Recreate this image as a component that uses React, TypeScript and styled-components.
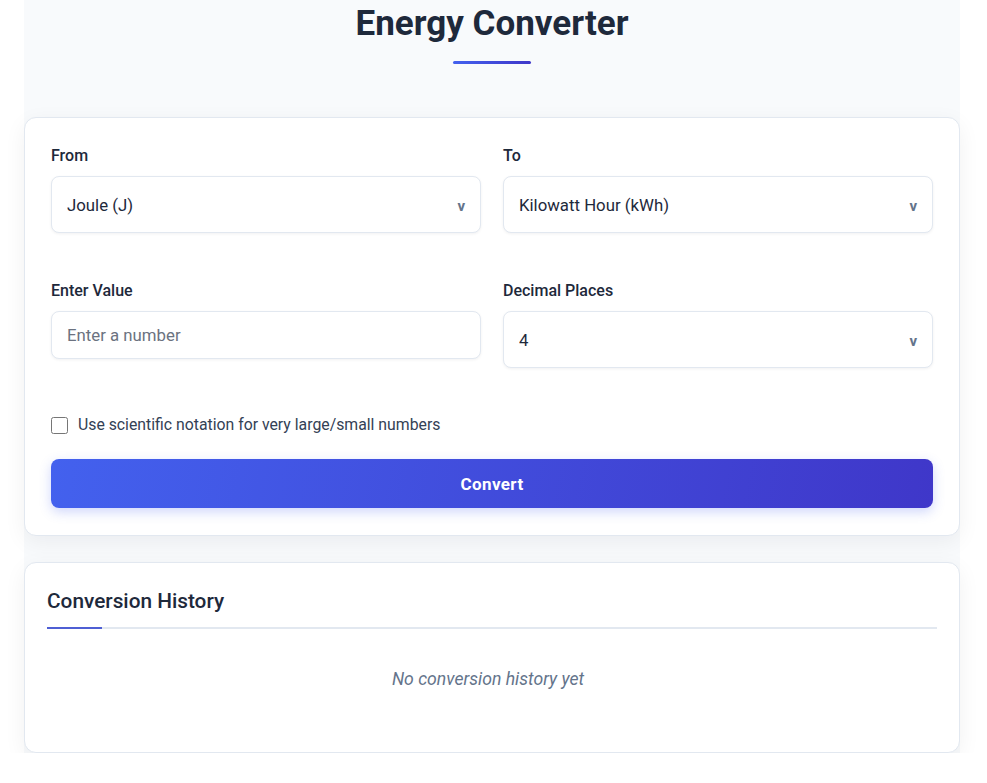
import React from "react";
import styled, { createGlobalStyle } from "styled-components";

const Global = createGlobalStyle`
  html, body { margin: 0; padding: 0; background: #ffffff; }
  body { font-family: Roboto, "Liberation Sans", Arial, sans-serif; color: #1e293b; }
  * { box-sizing: border-box; }
`;

const Page = styled.div`
  width: 936px;
  margin: 0 0 0 24px;
  background: #f8fafc;
  padding: 3px 0 0;
`;

const Header = styled.header`
  display: flex;
  flex-direction: column;
  align-items: center;
  margin-bottom: 53px;
`;

const Title = styled.h1`
  margin: 0;
  font-size: 35px;
  line-height: 42px;
  font-weight: 700;
  color: #1e293b;
`;

const Accent = styled.div`
  width: 78px;
  height: 3px;
  margin-top: 16px;
  border-radius: 2px;
  background: linear-gradient(90deg, #4361ee, #3f37c9);
`;

const Card = styled.section<{ $pad: string }>`
  background: #ffffff;
  border: 1px solid #e2e8f0;
  border-radius: 12px;
  box-shadow: 0 6px 22px rgba(15, 23, 42, 0.06);
  padding: ${(p) => p.$pad};
  display: flex;
  flex-direction: column;
`;

const Grid = styled.div`
  display: grid;
  grid-template-columns: 1fr 1fr;
  column-gap: 22px;
  row-gap: 46px;
  align-items: start;
`;

const Field = styled.div`
  display: flex;
  flex-direction: column;
`;

const Label = styled.label`
  font-size: 16px;
  line-height: 24px;
  font-weight: 500;
  color: #1e293b;
  margin-bottom: 8px;
`;

const SelectWrap = styled.div`
  position: relative;
`;

const Select = styled.select`
  appearance: none;
  -webkit-appearance: none;
  width: 100%;
  height: 57px;
  padding: 0 40px 0 15px;
  font-family: Roboto, "Liberation Sans", Arial, sans-serif;
  font-size: 16.8px;
  color: #1e293b;
  background: #ffffff;
  border: 1px solid #e2e8f0;
  border-radius: 8px;
  box-shadow: 0 1px 3px rgba(15, 23, 42, 0.06);
  outline: none;
`;

const Caret = styled.span`
  position: absolute;
  right: 16px;
  top: 50%;
  transform: translateY(-38%);
  font-size: 15px;
  font-weight: 700;
  color: #64748b;
  pointer-events: none;
  line-height: 1;
`;

const Input = styled.input`
  width: 100%;
  height: 48px;
  padding: 0 15px;
  font-family: Roboto, "Liberation Sans", Arial, sans-serif;
  font-size: 16.8px;
  color: #1e293b;
  background: #ffffff;
  border: 1px solid #e2e8f0;
  border-radius: 8px;
  box-shadow: 0 1px 3px rgba(15, 23, 42, 0.06);
  outline: none;
  &::placeholder { color: #6b7280; }
`;

const CheckRow = styled.label`
  display: flex;
  align-items: center;
  gap: 10px;
  margin-top: 45px;
  font-size: 15.8px;
  line-height: 24px;
  color: #334155;
`;

const Check = styled.input`
  width: 17px;
  height: 17px;
  margin: 0;
`;

const Button = styled.button`
  margin-top: 22px;
  height: 49px;
  border: none;
  border-radius: 8px;
  background: linear-gradient(100deg, #4361ee 0%, #3f37c9 100%);
  color: #ffffff;
  font-family: Roboto, "Liberation Sans", Arial, sans-serif;
  font-size: 17px;
  font-weight: 700;
  letter-spacing: 0.4px;
  box-shadow: 0 4px 12px rgba(67, 97, 238, 0.25);
  cursor: pointer;
`;

const Gap = styled.div`
  height: 26px;
`;

const HistoryHead = styled.div`
  position: relative;
  padding-bottom: 12px;
  border-bottom: 2px solid #e2e8f0;
  &::after {
    content: "";
    position: absolute;
    left: 0;
    bottom: -2px;
    width: 55px;
    height: 2px;
    background: #4f5fd4;
  }
`;

const HistoryTitle = styled.h2`
  margin: 0;
  font-size: 20.8px;
  line-height: 28px;
  font-weight: 500;
  color: #1e293b;
`;

const Empty = styled.p`
  margin: 0;
  padding: 38px 8px 37px 0;
  text-align: center;
  font-size: 17.6px;
  line-height: 24px;
  font-style: italic;
  color: #64748b;
`;

function SelectField({ label, value, options }: { label: string; value: string; options: string[] }) {
  return (
    <Field>
      <Label>{label}</Label>
      <SelectWrap>
        <Select defaultValue={value}>
          {options.map((o) => (
            <option key={o} value={o}>
              {o}
            </option>
          ))}
        </Select>
        <Caret>v</Caret>
      </SelectWrap>
    </Field>
  );
}

const units = [
  "Joule (J)",
  "Kilojoule (kJ)",
  "Calorie (cal)",
  "Kilocalorie (kcal)",
  "Watt Hour (Wh)",
  "Kilowatt Hour (kWh)",
  "Electronvolt (eV)",
  "British Thermal Unit (BTU)",
];

export default function App() {
  return (
    <>
      <Global />
      <Page>
        <Header>
          <Title>Energy Converter</Title>
          <Accent />
        </Header>
        <Card $pad="26px 26px 27px">
          <Grid>
            <SelectField label="From" value="Joule (J)" options={units} />
            <SelectField label="To" value="Kilowatt Hour (kWh)" options={units} />
            <Field>
              <Label>Enter Value</Label>
              <Input type="number" placeholder="Enter a number" />
            </Field>
            <SelectField
              label="Decimal Places"
              value="4"
              options={["0", "1", "2", "3", "4", "5", "6", "8", "10"]}
            />
          </Grid>
          <CheckRow>
            <Check type="checkbox" />
            Use scientific notation for very large/small numbers
          </CheckRow>
          <Button>Convert</Button>
        </Card>
        <Gap />
        <Card $pad="24px 22px 24px">
          <HistoryHead>
            <HistoryTitle>Conversion History</HistoryTitle>
          </HistoryHead>
          <Empty>No conversion history yet</Empty>
        </Card>
      </Page>
    </>
  );
}
